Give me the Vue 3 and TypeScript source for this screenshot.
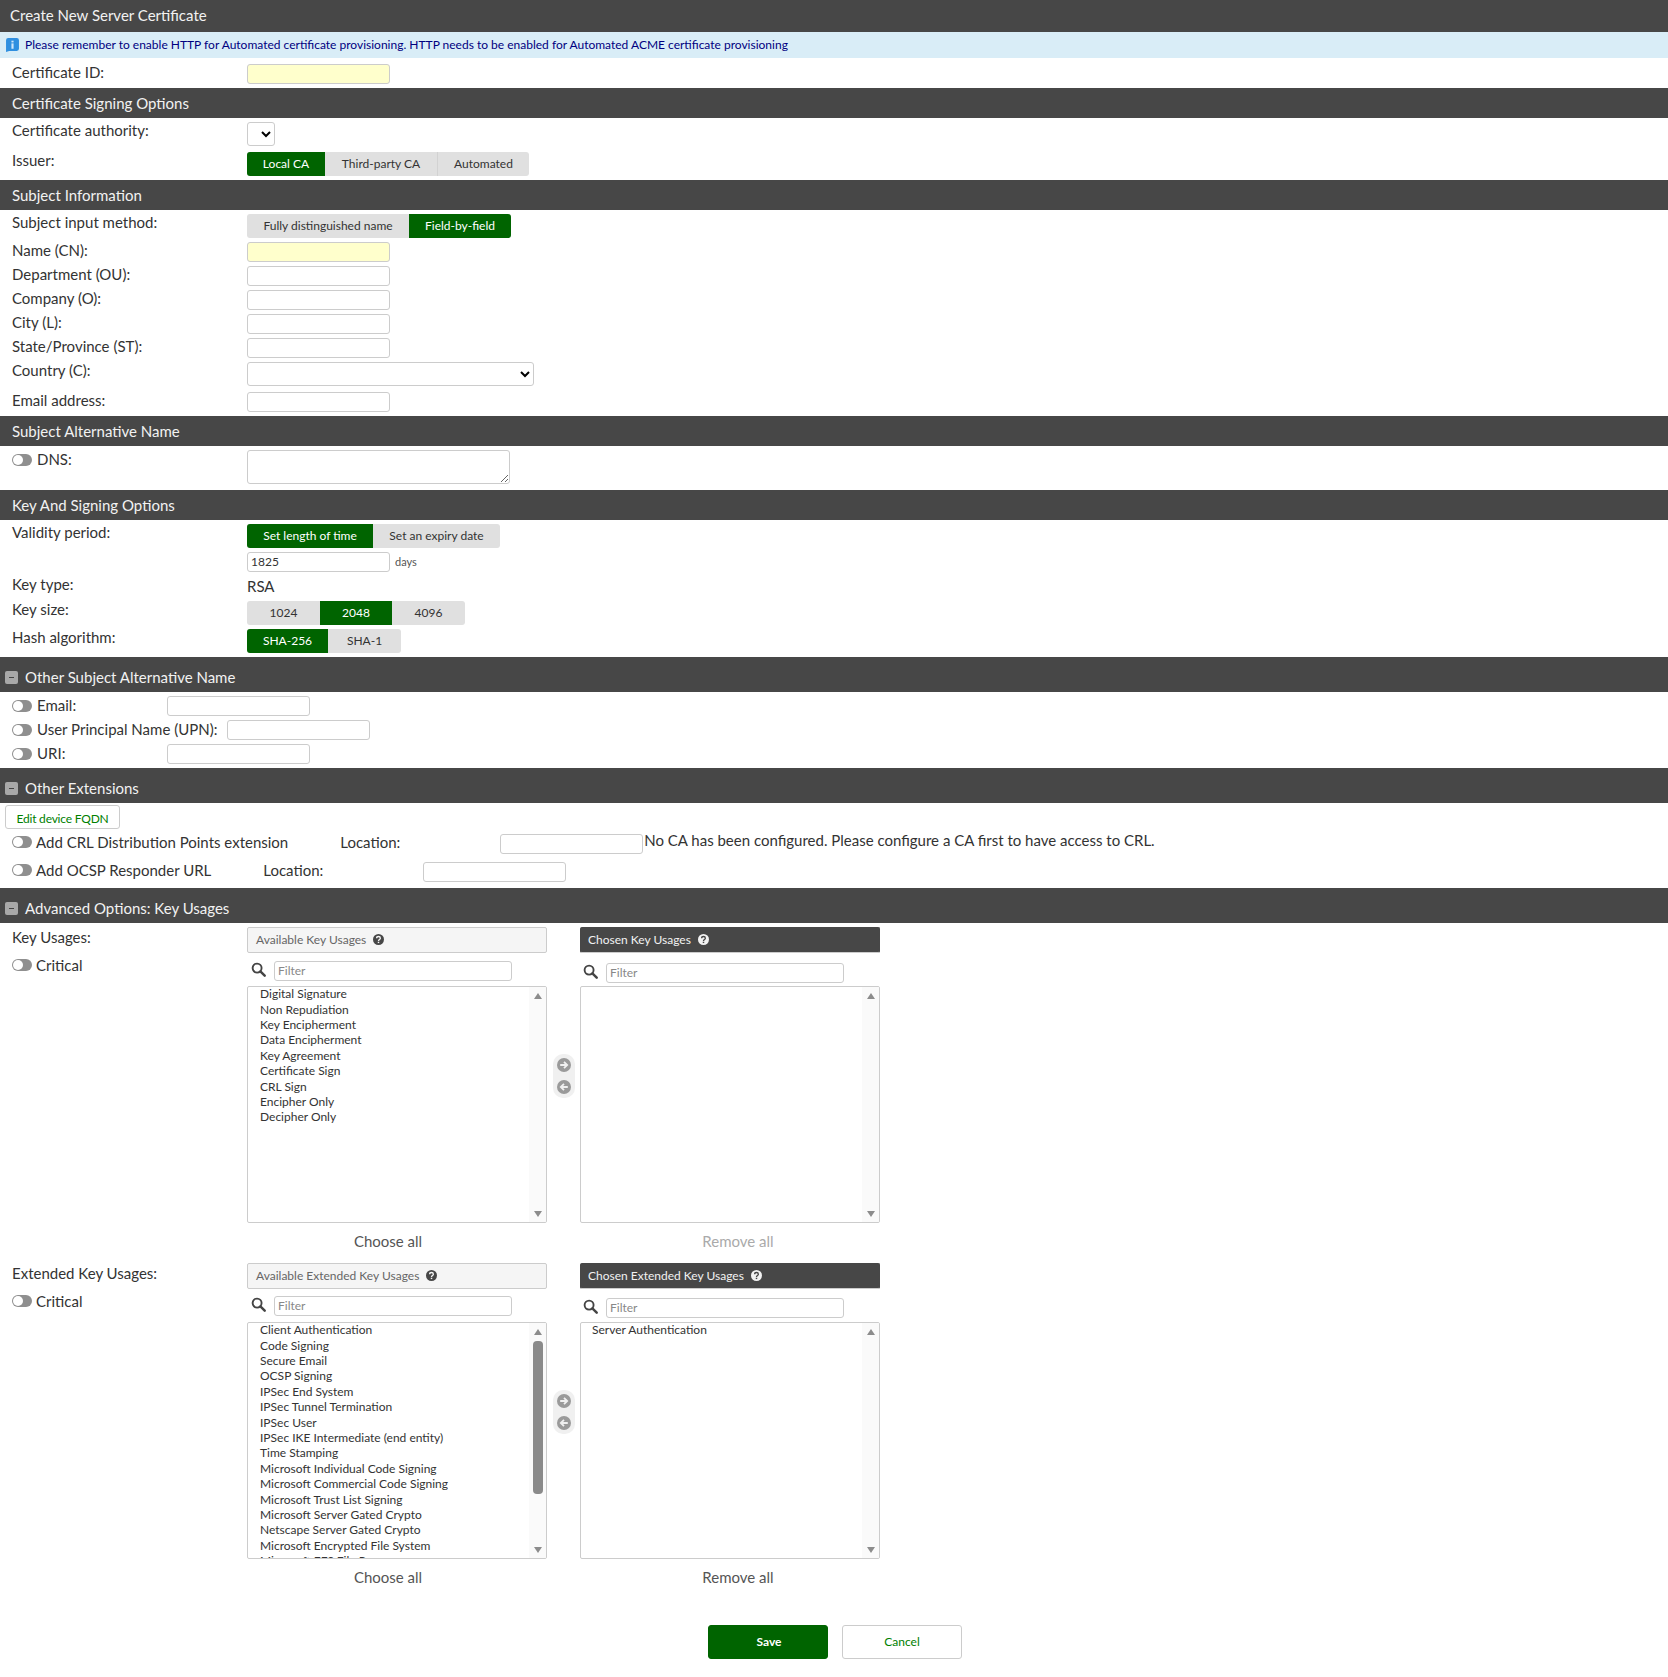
<script setup lang="ts">
interface Transfer {
  label: string
  available: string
  chosen: string
  items: string[]
  selected: string[]
  thumb: boolean
}

const transfers: Transfer[] = [
  {
    label: 'Key Usages:',
    available: 'Available Key Usages',
    chosen: 'Chosen Key Usages',
    items: [
      'Digital Signature',
      'Non Repudiation',
      'Key Encipherment',
      'Data Encipherment',
      'Key Agreement',
      'Certificate Sign',
      'CRL Sign',
      'Encipher Only',
      'Decipher Only',
    ],
    selected: [],
    thumb: false,
  },
  {
    label: 'Extended Key Usages:',
    available: 'Available Extended Key Usages',
    chosen: 'Chosen Extended Key Usages',
    items: [
      'Client Authentication',
      'Code Signing',
      'Secure Email',
      'OCSP Signing',
      'IPSec End System',
      'IPSec Tunnel Termination',
      'IPSec User',
      'IPSec IKE Intermediate (end entity)',
      'Time Stamping',
      'Microsoft Individual Code Signing',
      'Microsoft Commercial Code Signing',
      'Microsoft Trust List Signing',
      'Microsoft Server Gated Crypto',
      'Netscape Server Gated Crypto',
      'Microsoft Encrypted File System',
      'Microsoft EFS File Recovery',
    ],
    selected: ['Server Authentication'],
    thumb: true,
  },
]

const subjectFields: string[] = ['Department (OU):', 'Company (O):', 'City (L):', 'State/Province (ST):']
</script>

<template>
  <div class="page">
    <div class="title-bar">Create New Server Certificate</div>
    <div class="info-bar">
      <svg class="info-icon" viewBox="0 0 12 13"><path d="M2 0h8a2 2 0 0 1 2 2v8a2 2 0 0 1-2 2H3l-3 1V2a2 2 0 0 1 2-2z" fill="#2f8fe0" /><rect x="5" y="5" width="2" height="5" fill="#cfe6fa" /><rect x="5" y="2.5" width="2" height="1.6" fill="#cfe6fa" /></svg>
      Please remember to enable HTTP for Automated certificate provisioning. HTTP needs to be enabled for Automated ACME certificate provisioning
    </div>
    <div class="body first">
      <div class="row">
        <label class="label">Certificate ID:</label>
        <input class="input required" type="text" />
      </div>
    </div>

    <div class="section">Certificate Signing Options</div>
    <div class="body">
      <div class="row">
        <label class="label">Certificate authority:</label>
        <select class="select tiny"></select>
      </div>
      <div class="row spaced">
        <label class="label">Issuer:</label>
        <div class="seg">
          <span class="on w78">Local CA</span>
          <span class="w112">Third-party CA</span>
          <span class="w92 split">Automated</span>
        </div>
      </div>
    </div>

    <div class="section">Subject Information</div>
    <div class="body">
      <div class="row">
        <label class="label">Subject input method:</label>
        <div class="seg">
          <span class="w162">Fully distinguished name</span>
          <span class="on w102">Field-by-field</span>
        </div>
      </div>
      <div class="row">
        <label class="label">Name (CN):</label>
        <input class="input required" type="text" />
      </div>
      <div v-for="field in subjectFields" :key="field" class="row">
        <label class="label">{{ field }}</label>
        <input class="input" type="text" />
      </div>
      <div class="row">
        <label class="label">Country (C):</label>
        <select class="select country"></select>
      </div>
      <div class="row spaced">
        <label class="label">Email address:</label>
        <input class="input" type="text" />
      </div>
    </div>

    <div class="section">Subject Alternative Name</div>
    <div class="body tail6">
      <div class="row">
        <label class="label toggle-label"><span class="toggle"></span>DNS:</label>
        <textarea class="dns"></textarea>
      </div>
    </div>

    <div class="section">Key And Signing Options</div>
    <div class="body">
      <div class="row">
        <label class="label">Validity period:</label>
        <div class="seg">
          <span class="on w126">Set length of time</span>
          <span class="w127">Set an expiry date</span>
        </div>
      </div>
      <div class="row">
        <span class="label"></span>
        <input class="input" type="text" value="1825" />
        <span class="unit">days</span>
      </div>
      <div class="row key-type">
        <label class="label">Key type:</label>
        <span class="plain">RSA</span>
      </div>
      <div class="row">
        <label class="label">Key size:</label>
        <div class="seg">
          <span class="w73">1024</span>
          <span class="on w72">2048</span>
          <span class="w73">4096</span>
        </div>
      </div>
      <div class="row">
        <label class="label">Hash algorithm:</label>
        <div class="seg">
          <span class="on w81">SHA-256</span>
          <span class="w73">SHA-1</span>
        </div>
      </div>
    </div>

    <div class="section tall"><span class="collapse"></span>Other Subject Alternative Name</div>
    <div class="body">
      <div class="row">
        <label class="san"><span class="toggle"></span>Email:</label>
        <input class="input" type="text" />
      </div>
      <div class="row">
        <label class="san"><span class="toggle"></span>User Principal Name (UPN):</label>
        <input class="input" type="text" />
      </div>
      <div class="row">
        <label class="san"><span class="toggle"></span>URI:</label>
        <input class="input" type="text" />
      </div>
    </div>

    <div class="section tall"><span class="collapse"></span>Other Extensions</div>
    <div class="body ext">
      <button class="fqdn" type="button">Edit device FQDN</button>
      <div class="row crl">
        <label class="ext-label"><span class="toggle"></span>Add CRL Distribution Points extension</label>
        <span class="location">Location:</span>
        <input class="input" type="text" />
        <span class="note">No CA has been configured. Please configure a CA first to have access to CRL.</span>
      </div>
      <div class="row ocsp">
        <label class="ext-label"><span class="toggle"></span>Add OCSP Responder URL</label>
        <span class="location">Location:</span>
        <input class="input" type="text" />
      </div>
    </div>

    <div class="section tall"><span class="collapse"></span>Advanced Options: Key Usages</div>
    <div class="usages">
      <div v-for="t in transfers" :key="t.label" class="transfer">
        <div class="side">
          <label class="side-label">{{ t.label }}</label>
          <label class="critical"><span class="toggle"></span>Critical</label>
        </div>

        <div class="col">
          <div class="col-head">
            {{ t.available }}
            <svg class="help" viewBox="0 0 12 12"><circle cx="6" cy="6" r="6" fill="currentColor" /><path d="M4 4.6C4 3.4 4.9 2.7 6 2.7s2 .7 2 1.8c0 1.5-2 1.5-2 3" fill="none" stroke="var(--help-mark)" stroke-width="1.5" /><rect x="5.2" y="8.4" width="1.6" height="1.5" fill="var(--help-mark)" /></svg>
          </div>
          <div class="filter">
            <svg class="search" viewBox="0 0 16 16"><circle cx="6.5" cy="6.5" r="4.8" fill="none" stroke="#444" stroke-width="2" /><path d="M10 10l4.6 4.6" stroke="#444" stroke-width="2.6" stroke-linecap="round" /></svg>
            <input class="filter-input" type="text" placeholder="Filter" />
          </div>
          <div class="list">
            <div v-for="item in t.items" :key="item" class="item">{{ item }}</div>
            <div class="scrollbar">
              <span class="arrow up"></span>
              <span v-if="t.thumb" class="thumb"></span>
              <span class="arrow down"></span>
            </div>
          </div>
          <div class="action">Choose all</div>
        </div>

        <div class="mid">
          <div class="pill">
            <svg viewBox="0 0 14 14"><circle cx="7" cy="7" r="7" fill="#9a9a9a" /><path d="M3.2 7h6.6M7 3.8L10.2 7 7 10.2" fill="none" stroke="#f0f0f0" stroke-width="1.8" /></svg>
            <svg viewBox="0 0 14 14"><circle cx="7" cy="7" r="7" fill="#9a9a9a" /><path d="M10.8 7H4.2M7 3.8L3.8 7 7 10.2" fill="none" stroke="#f0f0f0" stroke-width="1.8" /></svg>
          </div>
        </div>

        <div class="col chosen">
          <div class="col-head dark">
            {{ t.chosen }}
            <svg class="help" viewBox="0 0 12 12"><circle cx="6" cy="6" r="6" fill="currentColor" /><path d="M4 4.6C4 3.4 4.9 2.7 6 2.7s2 .7 2 1.8c0 1.5-2 1.5-2 3" fill="none" stroke="var(--help-mark)" stroke-width="1.5" /><rect x="5.2" y="8.4" width="1.6" height="1.5" fill="var(--help-mark)" /></svg>
          </div>
          <div class="filter">
            <svg class="search" viewBox="0 0 16 16"><circle cx="6.5" cy="6.5" r="4.8" fill="none" stroke="#444" stroke-width="2" /><path d="M10 10l4.6 4.6" stroke="#444" stroke-width="2.6" stroke-linecap="round" /></svg>
            <input class="filter-input" type="text" placeholder="Filter" />
          </div>
          <div class="list">
            <div v-for="item in t.selected" :key="item" class="item">{{ item }}</div>
            <div class="scrollbar">
              <span class="arrow up"></span>
              <span class="arrow down"></span>
            </div>
          </div>
          <div class="action" :class="{ muted: !t.selected.length }">Remove all</div>
        </div>
      </div>
    </div>

    <div class="footer">
      <button class="btn save" type="button">Save</button>
      <button class="btn cancel" type="button">Cancel</button>
    </div>
  </div>
</template>

<style>
html,
body {
  margin: 0;
  background: #fff;
}
</style>

<style scoped>
.page {
  width: 1668px;
  height: 1677px;
  overflow: hidden;
  font-family: Lato, "Open Sans", sans-serif;
  font-size: 15px;
  color: #333;
  background: #fff;
}

.title-bar {
  height: 32px;
  box-sizing: border-box;
  line-height: 30px;
  padding: 0 0 2px 10px;
  background: #474747;
  color: #f2f2f2;
  font-size: 15px;
}

.info-bar {
  height: 26px;
  box-sizing: border-box;
  display: flex;
  align-items: center;
  gap: 6px;
  padding: 0 0 2px 6px;
  background: #d9edf7;
  color: #000080;
  font-size: 12px;
}

.info-icon {
  width: 13px;
  height: 14px;
  margin-top: 2px;
}

.section {
  height: 30px;
  line-height: 30px;
  padding-left: 12px;
  background: #474747;
  color: #f2f2f2;
  font-size: 15px;
  display: flex;
  align-items: center;
}

.section.tall {
  box-sizing: border-box;
  height: 35px;
  padding: 4px 0 0 5px;
}

.collapse {
  position: relative;
  width: 13px;
  height: 13px;
  margin: 2px 7px 0 0;
  border-radius: 2px;
  background: #a8a8a8;
}

.collapse::after {
  content: "";
  position: absolute;
  left: 4px;
  right: 4px;
  top: 6px;
  height: 1px;
  background: #444;
}

.body {
  display: flex;
  flex-direction: column;
  gap: 4px;
  padding: 4px 0;
}

.body.first {
  padding-top: 6px;
}

.body.tail6 {
  padding-bottom: 6px;
}

.row {
  display: flex;
  align-items: flex-start;
  padding-left: 12px;
}

.row.spaced {
  margin-top: 2px;
}

.label {
  width: 235px;
  flex: none;
  line-height: 20px;
  margin-top: -2px;
  display: flex;
  align-items: center;
}

.label.toggle-label {
  margin-top: -1px;
}

.label.toggle-label .toggle {
  margin-top: 2px;
}

.input {
  box-sizing: border-box;
  width: 143px;
  height: 20px;
  padding: 0 3px 2px;
  border: 1px solid #ccc;
  border-radius: 3px;
  background: #fff;
  font: 12px Lato, sans-serif;
  color: #333;
  outline: none;
}

.input.required {
  background: #ffffcc;
}

.select {
  box-sizing: border-box;
  height: 24px;
  padding: 0;
  border: 1px solid #ccc;
  border-radius: 3px;
  background: #fff;
  font: 13px Lato, sans-serif;
}

.select.tiny {
  width: 28px;
}

.select.country {
  width: 287px;
}

.seg {
  display: flex;
  height: 24px;
  border-radius: 3px;
  overflow: hidden;
  background: #e0e0e0;
  font-size: 12px;
}

.seg span {
  box-sizing: border-box;
  display: flex;
  align-items: center;
  justify-content: center;
  padding-bottom: 2px;
  color: #333;
}

.seg .on {
  background: #006400;
  color: #fff;
}

.seg .split {
  border-left: 1px solid #d2d2d2;
}

.w72 { width: 72px; }
.w73 { width: 73px; }
.w78 { width: 78px; }
.w81 { width: 81px; }
.w92 { width: 92px; }
.w102 { width: 102px; }
.w112 { width: 112px; }
.w126 { width: 126px; }
.w127 { width: 127px; }
.w162 { width: 162px; }

.toggle {
  position: relative;
  flex: none;
  width: 20px;
  height: 12px;
  margin-right: 5px;
  border-radius: 6px;
  background: #8f8f8f;
}

.toggle::after {
  content: "";
  position: absolute;
  left: 1px;
  top: 1px;
  width: 10px;
  height: 10px;
  border-radius: 50%;
  background: #fff;
}

.dns {
  display: block;
  box-sizing: border-box;
  width: 263px;
  height: 34px;
  border: 1px solid #ccc;
  border-radius: 3px;
  outline: none;
}

.unit {
  margin: 2px 0 0 5px;
  font-size: 11px;
  line-height: 16px;
  color: #555;
}

.key-type {
  height: 21px;
}

.plain {
  margin-top: -1px;
  line-height: 22px;
}

.san {
  min-width: 145px;
  margin-top: -1px;
  padding-right: 10px;
  line-height: 20px;
  display: flex;
  align-items: center;
  white-space: nowrap;
}

.san .toggle {
  margin-top: 2px;
}

.body.ext {
  padding: 2px 0 6px;
  gap: 0;
}

.fqdn {
  align-self: flex-start;
  width: 115px;
  height: 24px;
  margin-left: 5px;
  padding: 2px 0 0;
  border: 1px solid #ccc;
  border-radius: 3px;
  background: #fff;
  color: #008000;
  font: 12px Lato, sans-serif;
  letter-spacing: -0.2px;
}

.crl {
  margin-top: 5px;
}

.ocsp {
  margin-top: 8px;
}

.ext-label {
  display: flex;
  align-items: center;
  margin: -2px 52px 0 0;
  line-height: 20px;
  white-space: nowrap;
}

.ext-label .toggle {
  margin: -1px 4px 0 0;
}

.location {
  width: 160px;
  flex: none;
  margin-top: -2px;
  line-height: 20px;
}

.note {
  margin: -4px 0 0 1px;
  line-height: 20px;
  white-space: nowrap;
}

.usages {
  padding-top: 4px;
}

.transfer {
  display: flex;
  align-items: flex-start;
  height: 336px;
  padding-left: 12px;
}

.side {
  width: 235px;
  flex: none;
}

.side-label {
  display: block;
  line-height: 20px;
}

.critical {
  display: flex;
  align-items: center;
  line-height: 20px;
  margin-top: 8px;
}

.critical .toggle {
  margin-right: 4px;
}

.col {
  --help-mark: #f5f5f5;
  width: 300px;
  flex: none;
}

.col-head {
  box-sizing: border-box;
  height: 26px;
  display: flex;
  align-items: center;
  gap: 7px;
  padding: 0 0 2px 8px;
  border: 1px solid #ccc;
  border-radius: 2px;
  background: #f5f5f5;
  color: #666;
  font-size: 12px;
}

.col-head .help {
  color: #474747;
}

.col-head.dark {
  --help-mark: #474747;
  padding-left: 7px;
  border-color: #474747;
  border-bottom-color: #ccc;
  background: #474747;
  color: #f2f2f2;
}

.col-head.dark .help {
  color: #f2f2f2;
}

.help {
  width: 11px;
  height: 11px;
}

.filter {
  display: flex;
  align-items: flex-start;
  height: 33px;
  padding: 8px 0 0 4px;
  box-sizing: border-box;
}

.chosen .filter {
  padding: 10px 0 0 3px;
}

.transfer:last-child .filter {
  padding-top: 7px;
}

.transfer:last-child .chosen .filter {
  padding-top: 9px;
}

.search {
  width: 15px;
  height: 15px;
  margin: 1px 8px 0 0;
}

.filter-input {
  box-sizing: border-box;
  width: 238px;
  height: 20px;
  padding: 0 3px 2px;
  border: 1px solid #ccc;
  border-radius: 3px;
  font: 12px Lato, sans-serif;
  outline: none;
}

.filter-input::placeholder {
  color: #888;
}

.list {
  position: relative;
  box-sizing: border-box;
  height: 237px;
  padding-left: 12px;
  overflow: hidden;
  border: 1px solid #ccc;
  border-radius: 2px;
  background: #fff;
  font-size: 12px;
  color: #333;
}

.chosen .list {
  padding-left: 11px;
}

.item {
  height: 15.4px;
  line-height: 15.4px;
  white-space: nowrap;
}

.item:first-child {
  margin-top: -0.8px;
}

.scrollbar {
  position: absolute;
  top: 0;
  right: 0;
  bottom: 0;
  width: 17px;
  background: #fafafa;
}

.arrow {
  position: absolute;
  left: 5px;
  width: 0;
  height: 0;
  border-left: 4px solid transparent;
  border-right: 4px solid transparent;
}

.arrow.up {
  top: 6px;
  border-bottom: 6px solid #8c8c8c;
}

.arrow.down {
  bottom: 5px;
  border-top: 6px solid #8c8c8c;
}

.thumb {
  position: absolute;
  left: 4px;
  top: 18px;
  width: 10px;
  height: 153px;
  border-radius: 4px;
  background: #8a8a8a;
}

.action {
  margin-top: 8px;
  padding-right: 18px;
  line-height: 20px;
  text-align: center;
  color: #555;
}

.chosen .action {
  padding-right: 0;
  padding-left: 16px;
}

.action.muted {
  color: #aaa;
}

.mid {
  width: 33px;
  flex: none;
  padding-top: 127px;
  display: flex;
  justify-content: center;
}

.pill {
  display: flex;
  flex-direction: column;
  gap: 8px;
  padding: 4px;
  border-radius: 10px;
  background: #f0f0f0;
}

.pill svg {
  width: 14px;
  height: 14px;
}

.footer {
  display: flex;
  gap: 14px;
  padding: 26px 0 0 708px;
}

.btn {
  box-sizing: border-box;
  width: 120px;
  height: 34px;
  padding: 0 0 2px;
  border-radius: 3px;
  font: 12px Lato, sans-serif;
}

.save {
  padding-left: 2px;
  border: 1px solid #006400;
  background: #006400;
  color: #fff;
  font-weight: 700;
}

.cancel {
  border: 1px solid #ccc;
  background: #fff;
  color: #008000;
}
</style>
